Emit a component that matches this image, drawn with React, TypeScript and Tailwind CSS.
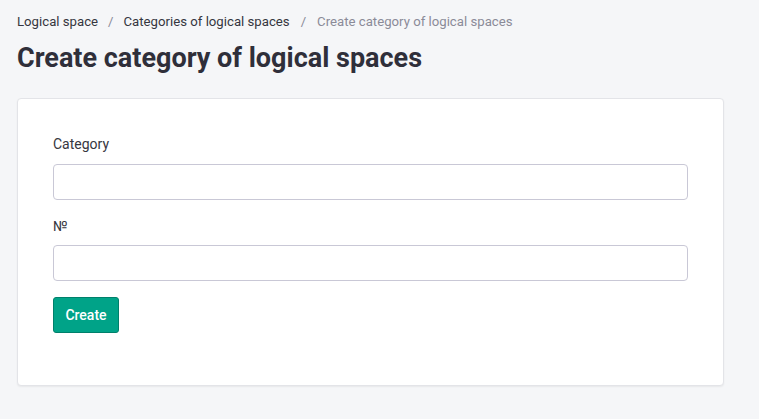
import { useState } from 'react';

export default function App() {
  const [category, setCategory] = useState('');
  const [num, setNum] = useState('');

  return (
    <div className="min-h-screen bg-[#f5f6f8] px-[17px] pt-[12px] text-[#363640]" style={{ fontFamily: 'Roboto, "Noto Sans", sans-serif' }}>
      {/* Breadcrumbs */}
      <nav className="flex items-center text-[13.2px] leading-[20px]">
        <a className="text-[#363640]">Logical space</a>
        <span className="mx-[10px] text-[#8b8b98]">/</span>
        <a className="text-[#363640]">Categories of logical spaces</a>
        <span className="mx-[11px] text-[#8b8b98]">/</span>
        <span className="text-[#8b8b98]">Create category of logical spaces</span>
      </nav>

      <h1 className="mt-[8px] text-[27px] font-bold leading-[36px] text-[#2f2f3a]">Create category of logical spaces</h1>

      {/* Form card */}
      <div className="mt-[22px] w-[707px] rounded-[4px] border border-[#e3e4e8] bg-white px-[35px] pt-[35px] pb-[52px] shadow-[0_1px_2px_rgba(0,0,0,0.06)]">
        <form onSubmit={(e) => e.preventDefault()}>
          <div className="mb-[16px]">
            <label className="block text-[14px] leading-[21px] mb-[9px]">Category</label>
            <input
              value={category}
              onChange={(e) => setCategory(e.target.value)}
              className="block h-[36px] w-full rounded-[4px] border border-[#c9c8d6] bg-white px-3 text-[14px] outline-none"
            />
          </div>
          <div className="mb-[16px]">
            <label className="block text-[14px] leading-[21px] mb-[8px]">№</label>
            <input
              value={num}
              onChange={(e) => setNum(e.target.value)}
              className="block h-[36px] w-full rounded-[4px] border border-[#c9c8d6] bg-white px-3 text-[14px] outline-none"
            />
          </div>
          <button
            type="submit"
            className="h-[36px] w-[66px] rounded-[3px] border border-[#00806b] bg-[#00a388] text-[14px] font-medium text-white"
          >
            Create
          </button>
        </form>
      </div>
    </div>
  );
}
